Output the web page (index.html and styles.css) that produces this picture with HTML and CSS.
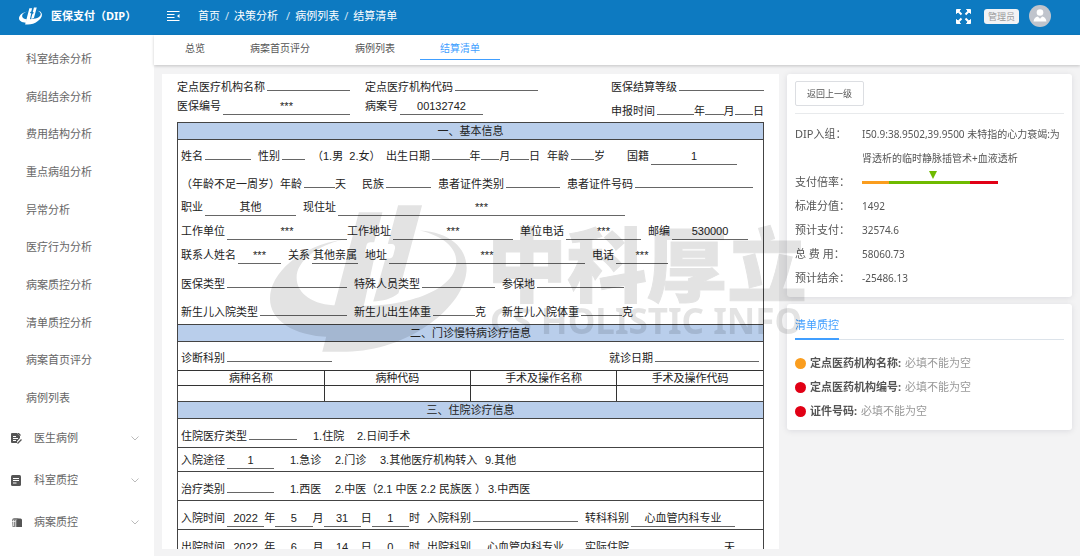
FILE: index.html
```html
<!DOCTYPE html>
<html lang="zh-CN">
  <head>
    <meta charset="UTF-8">
    <meta name="viewport" content="width=device-width, initial-scale=1">
    <title>医保支付（DIP） - 结算清单</title>
    <link rel="stylesheet" href="styles.css">
  </head>
  <body>
    <svg class="defs" aria-hidden="true">
      <symbol id="logo-mark" viewBox="330 44 592 440">
        <path d="M550 147C420 166 330 248 330 325C330 390 400 436 508 440L533 345C460 345 410 310 410 262C410 212 470 166 550 147Z"/>
        <path d="M597 65H668L643 155H632Q622 155 620 164L616 182Q615 190 624 190H646L612 346C740 346 890 300 890 212C890 172 850 136 780 120C870 125 921 172 921 232C921 350 740 484 560 484H487Z"/>
        <path d="M715 44H787L716 308C695 326 668 331 640 333L677 204H690Q699 202 701 192L706 172Q706 161 696 160H684Z"/>
      </symbol>
    </svg>

    <header class="header">
      <a class="brand" href="#">
        <svg class="brand-logo" aria-hidden="true"><use href="#logo-mark"/></svg>
        <span>医保支付（DIP）</span>
      </a>
      <button class="icon-btn" aria-label="收起菜单">
        <svg width="13" height="12" viewBox="0 0 13 12" fill="none" stroke="#fff">
          <path d="M0 1.5H12.5M0 4.5H7.5M0 7.5H7.5M0 10.5H12.5"/>
          <path d="M12.5 4v4L10 6z" fill="#fff" stroke="none"/>
        </svg>
      </button>
      <nav class="breadcrumb">
        <a href="#">首页</a><i>/</i><a href="#">决策分析</a><i class="sep-wide">/</i><a href="#">病例列表</a><i>/</i><a href="#">结算清单</a>
      </nav>
      <div class="header-right">
        <button class="icon-btn" aria-label="全屏">
          <svg width="15" height="15" viewBox="0 0 15 15" fill="#fff" stroke="#fff">
            <path d="M.5.5h4L.5 4.5zM14.5.5v4l-4-4zM.5 14.5v-4l4 4zM14.5 14.5h-4l4-4z"/>
            <path d="M2 2l3.5 3.5M13 2L9.500 5.500M2 13l3.500-3.500M13 13L9.500 9.500" stroke-width="2"/>
          </svg>
        </button>
        <span class="role">管理员</span>
        <svg class="avatar" width="22" height="22" viewBox="0 0 22 22">
          <circle cx="11" cy="11" r="11" fill="#c0c4cc"/>
          <circle cx="11" cy="7.500" r="3.300" fill="#fff"/>
          <path d="M4.500 16.500C5 13 6.500 11.800 8.800 11.400L11 13.800L13.200 11.400C15.500 11.800 17 13 17.500 16.500Z" fill="#fff"/>
        </svg>
      </div>
    </header>

    <div class="layout">
      <aside class="sidebar">
        <ul class="menu">
          <li><a href="#">科室结余分析</a></li>
          <li><a href="#">病组结余分析</a></li>
          <li><a href="#">费用结构分析</a></li>
          <li><a href="#">重点病组分析</a></li>
          <li><a href="#">异常分析</a></li>
          <li><a href="#">医疗行为分析</a></li>
          <li><a href="#">病案质控分析</a></li>
          <li><a href="#">清单质控分析</a></li>
          <li><a href="#">病案首页评分</a></li>
          <li><a href="#">病例列表</a></li>
        </ul>
        <button class="menu-group">
          <svg width="11" height="11" viewBox="0 0 11 11">
            <path d="M1 0H6L9 3V5L6 8.500V10H1Q0 10 0 9V1Q0 0 1 0Z" fill="#555"/>
            <path d="M2 3.500H5M2 5.500H7M2 7.500H5" stroke="#fff"/>
            <path d="M6.500 10.500L10.500 6.500M7 0L9.500 2.500" stroke="#555" stroke-width="1.300"/>
          </svg>
          <span>医生病例</span>
          <svg class="arrow" width="8" height="5" viewBox="0 0 8 5"><path d="M.5.5L4 4L7.500.5"/></svg>
        </button>
        <button class="menu-group">
          <svg width="11" height="11" viewBox="0 0 11 11">
            <rect width="10" height="11" rx="1.500" fill="#555"/>
            <path d="M2 3.500H8M2 5.500H8M2 8H5.500" stroke="#fff"/>
          </svg>
          <span>科室质控</span>
          <svg class="arrow" width="8" height="5" viewBox="0 0 8 5"><path d="M.5.5L4 4L7.500.5"/></svg>
        </button>
        <button class="menu-group">
          <svg width="11" height="11" viewBox="0 0 11 11">
            <path d="M5 1.500H9.500Q11 1.500 11 3V10H5Z" fill="#555"/>
            <path d="M1 3.500Q1 1 3.500 1H8L5 3.500V10H1.500Z" fill="#888"/>
            <path d="M0 4.500H4.500M2.500 3V9M4.800 3V10" stroke="#fff" stroke-width=".7"/>
          </svg>
          <span>病案质控</span>
          <svg class="arrow" width="8" height="5" viewBox="0 0 8 5"><path d="M.5.5L4 4L7.500.5"/></svg>
        </button>
      </aside>

      <main class="main">
        <nav class="tabs">
          <a href="#">总览</a>
          <a href="#">病案首页评分</a>
          <a href="#">病例列表</a>
          <a href="#" class="active">结算清单</a>
        </nav>

        <div class="content">
          <section class="sheet">
            <div class="sheet-head">
              <div class="field"><span>定点医疗机构名称</span><b></b></div>
              <div class="field code"><span>定点医疗机构代码</span><b></b></div>
              <div class="field end"><span>医保结算等级</span><b></b></div>
            </div>
            <div class="sheet-head sheet-head-last">
              <div class="field"><span>医保编号</span><b>***</b></div>
              <div class="field record"><span>病案号</span><b>00132742</b></div>
              <div class="field end date lower"><span>申报时间</span><b></b>年<b></b>月<b></b>日</div>
            </div>

            <div class="form">
              <h2>一、基本信息</h2>
              <div class="row tall r-name">
                <div class="field"><span>姓名</span><b></b></div>
                <div class="field"><span>性别</span><b></b></div>
                <div class="option">（1.男&nbsp; 2.女）</div>
                <div class="field date"><span>出生日期</span><b></b>年<b></b>月<b></b>日</div>
                <div class="field gap-l"><span>年龄</span><b></b>岁</div>
                <div class="field end"><span>国籍</span><b>1</b></div>
              </div>
              <div class="row tall r-card">
                <div class="field gap-m"><span>（年龄不足一周岁）年龄</span><b></b>天</div>
                <div class="field"><span>民族</span><b></b></div>
                <div class="field"><span>患者证件类别</span><b></b></div>
                <div class="field end"><span>患者证件号码</span><b></b></div>
              </div>
              <div class="row r-job">
                <div class="field"><span>职业</span><b>其他</b></div>
                <div class="field end"><span>现住址</span><b>***</b></div>
              </div>
              <div class="row r-work">
                <div class="field end"><span>工作单位</span><b>***</b></div>
                <div class="field"><span>工作地址</span><b>***</b></div>
                <div class="field"><span>单位电话</span><b>***</b></div>
                <div class="field end"><span>邮编</span><b>530000</b></div>
              </div>
              <div class="row r-contact">
                <div class="field"><span>联系人姓名</span><b>***</b></div>
                <div class="field"><span>关系</span><b>其他亲属</b></div>
                <div class="field"><span>地址</span><b>***</b></div>
                <div class="field end"><span>电话</span><b>***</b></div>
              </div>
              <div class="row tall r-insure">
                <div class="field"><span>医保类型</span><b></b></div>
                <div class="field"><span>特殊人员类型</span><b></b></div>
                <div class="field end"><span>参保地</span><b></b></div>
              </div>
              <div class="row tall r-baby">
                <div class="field"><span>新生儿入院类型</span><b></b></div>
                <div class="field gap-m"><span>新生儿出生体重</span><b></b>克</div>
                <div class="field end"><span>新生儿入院体重</span><b></b>克</div>
              </div>

              <h2>二、门诊慢特病诊疗信息</h2>
              <div class="row tall r-visit">
                <div class="field"><span>诊断科别</span><b></b></div>
                <div class="field end"><span>就诊日期</span><b></b></div>
              </div>
              <table class="disease">
                <thead>
                  <tr><th>病种名称</th><th>病种代码</th><th>手术及操作名称</th><th>手术及操作代码</th></tr>
                </thead>
                <tbody>
                  <tr><td></td><td></td><td></td><td></td></tr>
                </tbody>
              </table>

              <h2>三、住院诊疗信息</h2>
              <div class="row tall line r-stay">
                <div class="field gap-m"><span>住院医疗类型</span><b></b></div>
                <div class="option">1.住院</div>
                <div class="option">2.日间手术</div>
              </div>
              <div class="row line r-way">
                <div class="field gap-m"><span>入院途径</span><b>1</b></div>
                <div class="option">1.急诊</div>
                <div class="option">2.门诊</div>
                <div class="option">3.其他医疗机构转入</div>
                <div class="option">9.其他</div>
              </div>
              <div class="row tall line r-treat">
                <div class="field gap-m"><span>治疗类别</span><b></b></div>
                <div class="option">1.西医</div>
                <div class="option">2.中医（2.1 中医 2.2 民族医 ）</div>
                <div class="option">3.中西医</div>
              </div>
              <div class="row tall line r-time">
                <div class="field"><span>入院时间</span><b>2022</b>年<b>5</b>月<b>31</b>日<b>1</b>时</div>
                <div class="field"><span>入院科别</span><b></b></div>
                <div class="field end"><span>转科科别</span><b>心血管内科专业</b></div>
              </div>
              <div class="row tall line r-time">
                <div class="field"><span>出院时间</span><b>2022</b>年<b>6</b>月<b>14</b>日<b>0</b>时</div>
                <div class="field"><span>出院科别</span><b>心血管内科专业</b></div>
                <div class="field end"><span>实际住院</span><b>&nbsp;</b>天</div>
              </div>
            </div>
          </section>

          <aside class="panel">
            <section class="card">
              <div class="card-top">
                <button class="back">返回上一级</button>
              </div>
              <dl class="info">
                <dt>DIP入组：</dt><dd>I50.9:38.9502,39.9500 未特指的心力衰竭:为<br>肾透析的临时静脉插管术+血液透析</dd>
                <dt>支付倍率：</dt>
                <dd>
                  <svg class="rate" width="136" height="16" viewBox="0 0 136 16" role="img" aria-label="支付倍率">
                    <path d="M67 0H75L71 8Z" fill="#6fba00"/>
                    <rect y="10" width="28" height="3" fill="#fa9d1e"/>
                    <rect x="27" y="10" width="82" height="3" fill="#6fba00"/>
                    <rect x="108" y="10" width="28" height="3" fill="#e10015"/>
                  </svg>
                </dd>
                <dt>标准分值：</dt><dd>1492</dd>
                <dt>预计支付：</dt><dd>32574.6</dd>
                <dt>总 费 用：</dt><dd>58060.73</dd>
                <dt>预计结余：</dt><dd>-25486.13</dd>
              </dl>
            </section>
            <section class="card">
              <h3><span>清单质控</span></h3>
              <ul class="checks">
                <li><i class="dot warn"></i><strong>定点医药机构名称:</strong> 必填不能为空</li>
                <li><i class="dot"></i><strong>定点医药机构编号:</strong> 必填不能为空</li>
                <li><i class="dot"></i><strong>证件号码:</strong> 必填不能为空</li>
              </ul>
            </section>
          </aside>
        </div>
      </main>
    </div>

    <!-- watermark over the page -->
    <div class="watermark" aria-hidden="true">
      <svg class="wm-logo"><use href="#logo-mark"/></svg>
      <div class="wm-text">
        <div class="wm-cn">中科厚立</div>
        <div class="wm-en">CS HOLISTIC INFO</div>
      </div>
    </div>
  </body>
</html>
```
FILE: styles.css
```css
* {
  box-sizing: border-box;
}
body {
  margin: 0;
  height: 100vh;
  display: flex;
  flex-direction: column;
  overflow: hidden;
  background: #f3f3f4;
  color: #555;
  font-family: "Noto Sans", "Noto Sans CJK SC", sans-serif;
  font-size: 11px;
  line-height: 16px;
}
a {
  color: inherit;
  text-decoration: none;
}
ul, dl, dd, h2, h3 {
  margin: 0;
  padding: 0;
}
ul {
  list-style: none;
}
button {
  font: inherit;
  color: inherit;
  cursor: pointer;
}
.defs {
  position: absolute;
  width: 0;
  height: 0;
}

/* header */
.header {
  display: flex;
  align-items: center;
  flex: none;
  height: 35px;
  padding: 0 29px 3px 19px;
  background: #0d7ac1;
  color: #fff;
}
.brand {
  display: flex;
  align-items: center;
  gap: 9px;
  width: 148px;
  font-weight: bold;
}
.brand-logo {
  width: 23px;
  height: 18px;
  fill: #fff;
}
.icon-btn {
  display: flex;
  padding: 0;
  border: none;
  background: none;
}
.breadcrumb {
  display: flex;
  margin-left: 18px;
}
.breadcrumb i {
  margin: 0 5px;
  font-style: normal;
  color: #cfe2f3;
}
.breadcrumb .sep-wide {
  margin-left: 8px;
}
.header-right {
  display: flex;
  align-items: center;
  gap: 10px;
  margin-left: auto;
}
.role {
  margin-left: 3px;
  padding: 0 4px;
  border-radius: 3px;
  background: #f2f3f5;
  color: #999;
  font-size: 9px;
  line-height: 15px;
}

.layout {
  display: flex;
  flex: 1;
  min-height: 0;
}

/* sidebar */
.sidebar {
  display: flex;
  flex-direction: column;
  flex: none;
  width: 154px;
  padding: 5px 0 13px;
  background: #fff;
  color: #666;
}
.menu {
  display: flex;
  flex-direction: column;
  flex: 1;
}
.menu li {
  display: flex;
  align-items: center;
  flex: 1;
  padding-left: 26px;
}
.menu-group {
  display: flex;
  align-items: center;
  gap: 12px;
  height: 42px;
  padding: 0 15px 0 11px;
  border: none;
  background: none;
}
.arrow {
  margin-left: auto;
  fill: none;
  stroke: #bbb;
}

/* tabs */
.main {
  display: flex;
  flex-direction: column;
  flex: 1;
  min-width: 0;
}
.tabs {
  display: flex;
  gap: 5px;
  flex: none;
  height: 30px;
  padding: 0 11px;
  background: #fff;
  box-shadow: 0 1px 3px rgba(0, 0, 0, 0.2);
  font-size: 10px;
}
.tabs a {
  height: 25px;
  padding: 0 20px;
  line-height: 26px;
}
.tabs .active {
  color: #409eff;
  border-bottom: 1px solid #409eff;
}
.content {
  display: flex;
  flex: 1;
  gap: 8px;
  min-height: 0;
  padding: 9px 8px 7px;
}

/* settlement sheet */
.sheet {
  flex: 1;
  min-width: 0;
  padding: 5px 15px 0;
  overflow: auto;
  scrollbar-width: none;
  background: #fff;
  color: #222;
  font-family: "Liberation Sans", "Noto Sans CJK SC", sans-serif;
}
.sheet-head {
  display: grid;
  grid-template-columns: 188fr 246fr 153fr;
  height: 19px;
}
.sheet-head-last {
  height: 24px;
}
.field {
  display: flex;
  align-items: baseline;
  padding-right: 7px;
  white-space: nowrap;
}
.field span {
  margin-right: 2px;
}
.field b {
  flex: 1;
  border-bottom: 1px solid #666;
  font-weight: normal;
  text-align: center;
}
.sheet-head .field {
  padding-right: 15px;
}
.sheet-head .code {
  padding-right: 73px;
}
.sheet-head .record {
  padding-right: 128px;
}
.sheet-head .end {
  padding-right: 0;
}
.lower {
  margin-top: 5px;
}
.date b:nth-of-type(1) {
  flex: 2;
}
.gap-m {
  padding-right: 16px;
}
.gap-l {
  padding-right: 22px;
}
.end {
  padding-right: 0;
}
.option {
  white-space: nowrap;
}
.form {
  border: 1px solid #444;
  border-top: none;
}
.form h2 {
  height: 18px;
  border: solid #444;
  border-width: 1px 0;
  background: #b9ceeb;
  font-size: 11px;
  font-weight: normal;
  line-height: 16px;
  text-align: center;
}
.row {
  display: grid;
  height: 24px;
  padding: 3px 0 0 3px;
}
.tall {
  height: 28px;
  padding-top: 8px;
}
.line {
  padding-top: 4px;
  border-bottom: 1px solid #444;
}
.tall.line {
  height: 29px;
  padding-top: 9px;
}
.r-name { grid-template-columns: 77fr 54fr 74fr 161fr 80fr 110fr 26fr; }
.r-card { grid-template-columns: 181fr 76fr 129fr 186fr 10fr; }
.r-job { grid-template-columns: 122fr 322fr 138fr; }
.r-work { grid-template-columns: 166fr 173fr 128fr 100fr 15fr; }
.r-contact { grid-template-columns: 107fr 77fr 227fr 76fr 95fr; }
.r-insure { grid-template-columns: 173fr 148fr 122fr 139fr; }
.r-baby { grid-template-columns: 173fr 148fr 131fr 130fr; }
.r-visit { grid-template-columns: 158fr 270fr 150fr 4fr; }
.r-visit .end { grid-column: 3; }
.r-stay { grid-template-columns: 132fr 44fr 406fr; }
.r-way { grid-template-columns: 109fr 45fr 45fr 105fr 278fr; }
.r-treat { grid-template-columns: 109fr 45fr 153fr 275fr; }
.r-time { grid-template-columns: 246fr 158fr 150fr 28fr; }

.disease {
  width: 100%;
  table-layout: fixed;
  border-collapse: collapse;
}
.disease th,
.disease td {
  height: 15px;
  padding: 0;
  border: solid #333;
  border-width: 1px 1px 0 0;
  font-weight: normal;
  line-height: 14px;
}
.disease th:last-child,
.disease td:last-child {
  border-right: none;
}

/* right panel */
.panel {
  display: flex;
  flex-direction: column;
  gap: 7px;
  flex: none;
  width: 285px;
}
.card {
  padding: 7px 8px;
  border-radius: 3px;
  background: #fff;
  box-shadow: 0 1px 6px rgba(0, 0, 50, 0.1);
}
.card-top {
  padding-bottom: 7px;
  border-bottom: 1px solid #e8eaec;
}
.back {
  display: block;
  height: 25px;
  padding: 0 11px;
  border: 1px solid #dcdee2;
  border-radius: 2px;
  background: #fff;
  font-size: 9px;
}
.info {
  display: grid;
  grid-template-columns: 67px 1fr;
  padding-top: 8px;
  line-height: 24px;
}
.info dd {
  font-size: 10px;
  white-space: nowrap;
}
.rate {
  display: block;
  margin-top: 1px;
}
.card h3 {
  margin: 2px 0 11px;
  border-bottom: 1px solid #dce3ea;
  font-size: 11px;
  font-weight: normal;
}
.card h3 span {
  display: inline-block;
  padding: 4px 0 5px;
  margin-bottom: -1px;
  border-bottom: 2px solid #409eff;
  color: #409eff;
}
.checks {
  color: #999;
  line-height: 24px;
}
.checks li {
  display: flex;
  align-items: center;
  gap: 4px;
}
.checks strong {
  color: #555;
}
.dot {
  width: 11px;
  height: 11px;
  border-radius: 50%;
  background: #e10015;
}
.warn {
  background: #fa9d1e;
}

/* watermark */
.watermark {
  position: absolute;
  top: 205px;
  left: 270px;
  display: flex;
  gap: 20px;
  opacity: 0.11;
  pointer-events: none;
  color: #000;
  font-weight: bold;
  white-space: nowrap;
}
.wm-logo {
  width: 197px;
  height: 147px;
}
.wm-cn {
  height: 96px;
  font-family: "Noto Sans CJK SC", sans-serif;
  font-size: 80px;
  font-weight: 900;
  line-height: 110px;
  -webkit-text-stroke: 1px #000;
}
.wm-en {
  padding-left: 3px;
  font-size: 35px;
  line-height: 40px;
}
```
